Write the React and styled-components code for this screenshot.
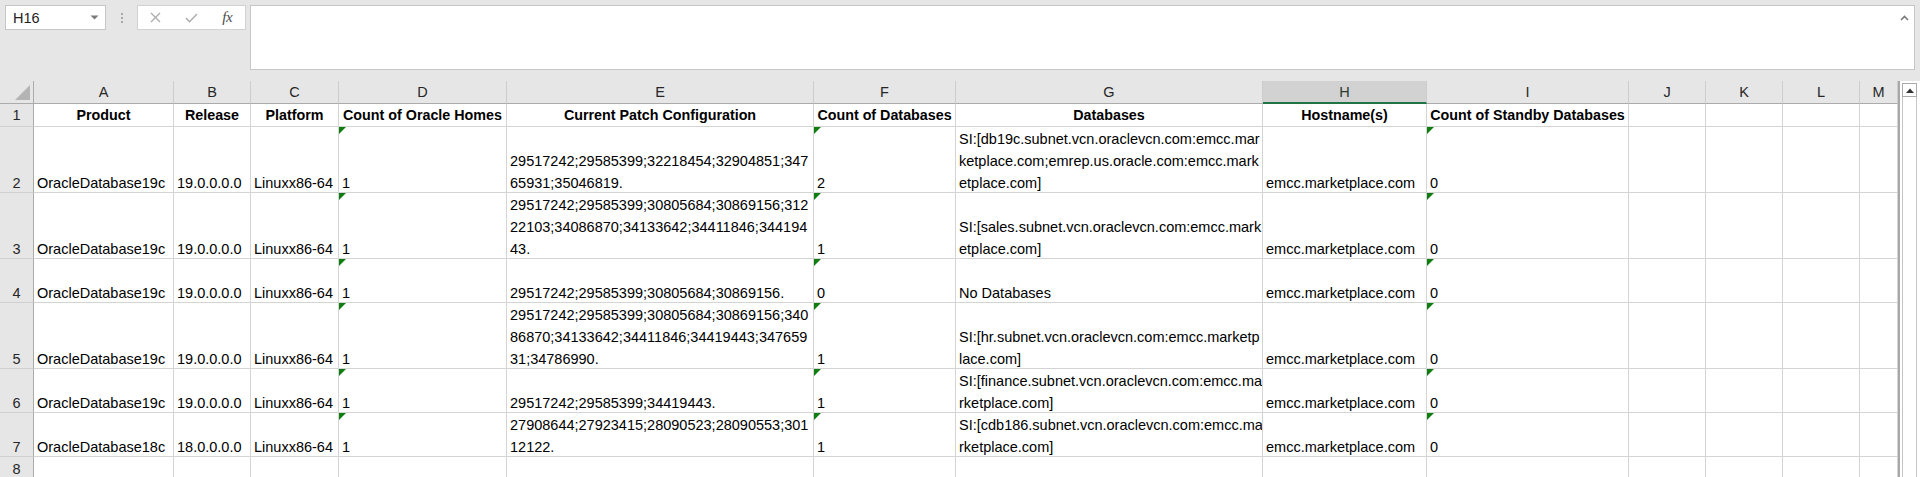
import React from "react";
import styled, { createGlobalStyle } from "styled-components";

const Global = createGlobalStyle`
  html, body { margin: 0; padding: 0; background: #fff; overflow: hidden; }
  #root { width: 1920px; height: 477px; }
`;

const Page = styled.div`
  width: 1920px;
  height: 477px;
  display: flex;
  flex-direction: column;
  overflow: hidden;
  background: #fff;
  font-family: "Liberation Sans", Arial, sans-serif;
`;

const FormulaBar = styled.div`
  flex: none;
  height: 81px;
  box-sizing: border-box;
  padding: 5px 5px 0 5px;
  background: #e6e6e6;
  display: flex;
  align-items: flex-start;
`;

const NameBox = styled.div`
  width: 101px;
  height: 25px;
  box-sizing: border-box;
  background: #fff;
  border: 1px solid #c6c6c6;
  display: flex;
  align-items: center;
  justify-content: space-between;
  padding: 0 6px 0 7px;
  font-size: 14.5px;
  color: #222;
`;

const Grip = styled.div`
  width: 31px;
  height: 25px;
  display: flex;
  flex-direction: column;
  align-items: center;
  justify-content: center;
  gap: 2px;
`;

const GripDot = styled.span`
  width: 2px;
  height: 2px;
  background: #a8a8a8;
`;

const FxButtons = styled.div`
  width: 109px;
  height: 25px;
  box-sizing: border-box;
  background: #fff;
  border: 1px solid #d2d2d2;
  display: flex;
  align-items: center;
`;

const FxButton = styled.span`
  flex: 1;
  display: flex;
  align-items: center;
  justify-content: center;
  color: ${(p) => (p.$disabled ? "#a9a9a9" : "#4a4a4a")};
`;

const FxLabel = styled.span`
  font-family: "Liberation Serif", "Times New Roman", serif;
  font-style: italic;
  font-size: 15px;
  letter-spacing: -0.5px;
  color: #4a4a4a;
`;

const FormulaInput = styled.div`
  margin-left: 4px;
  width: 1665px;
  height: 65px;
  box-sizing: border-box;
  background: #fff;
  border: 1px solid #c6c6c6;
  display: flex;
  justify-content: flex-end;
  align-items: flex-start;
  padding: 9px 5px 0 0;
`;

const Sheet = styled.div`
  flex: 1;
  display: flex;
  min-height: 0;
`;

const Grid = styled.div`
  display: grid;
  grid-template-columns: 34px 140px 77px 88px 168px 307px 142px 307px 164px 202px 77px 77px 77px 38px;
  grid-template-rows: 23px 23px 66px 66px 44px 66px 44px 44px 22px;
  flex: none;
`;

const Corner = styled.div`
  box-sizing: border-box;
  background: #e6e6e6;
  border-right: 1px solid #ababab;
  border-bottom: 1px solid #ababab;
  display: flex;
  align-items: flex-end;
  justify-content: flex-end;
  padding: 0 3px 3px 0;
`;

const ColHeader = styled.div`
  box-sizing: border-box;
  background: ${(p) => (p.$active ? "#d2d2d2" : "#e6e6e6")};
  border-right: 1px solid #cdcdcd;
  border-bottom: ${(p) => (p.$active ? "2px solid #217346" : "1px solid #ababab")};
  display: flex;
  align-items: flex-start;
  justify-content: center;
  overflow: hidden;
  font-size: 14.5px;
  line-height: 22px;
  color: ${(p) => (p.$active ? "#2b3a30" : "#262626")};
`;

const RowHeader = styled.div`
  box-sizing: border-box;
  background: #e6e6e6;
  border-right: 1px solid #ababab;
  border-bottom: 1px solid #d0d0d0;
  display: flex;
  flex-direction: column;
  justify-content: flex-end;
  align-items: center;
  font-size: 14.5px;
  line-height: 22px;
  color: #262626;
`;

const Cell = styled.div`
  position: relative;
  box-sizing: border-box;
  border-right: 1px solid #d4d4d4;
  border-bottom: 1px solid #d4d4d4;
  padding: 0 3px;
  display: flex;
  flex-direction: column;
  justify-content: flex-end;
  align-items: ${(p) => (p.$center ? "center" : "flex-start")};
  overflow: hidden;
  white-space: nowrap;
  font-size: ${(p) => (p.$bold ? "14.3px" : "14.5px")};
  font-weight: ${(p) => (p.$bold ? 700 : 400)};
  line-height: 22px;
  color: #000;
`;

const Lines = styled.div`
  display: flex;
  flex-direction: column;
  align-items: inherit;
  margin-bottom: ${(p) => (p.$shift ? "-2px" : "0")};
`;

const Flag = styled.span`
  position: absolute;
  top: 0;
  left: 0;
  width: 0;
  height: 0;
  border-top: 7px solid #0f7d0f;
  border-right: 7px solid transparent;
`;

const ScrollBar = styled.div`
  flex: 1;
  box-sizing: border-box;
  border-left: 2px solid #a8a8a8;
  padding: 2px 3px 0 2px;
  display: flex;
  flex-direction: column;
  background: #fff;
`;

const ArrowButton = styled.div`
  flex: none;
  height: 14px;
  box-sizing: border-box;
  border: 1px solid #ababab;
  background: #fff;
  display: flex;
  align-items: center;
  justify-content: center;
`;

const Thumb = styled.div`
  flex: 1;
  box-sizing: border-box;
  border-left: 1px solid #c6c6c6;
  border-right: 1px solid #c6c6c6;
  background: #fff;
`;

const columns = ["A", "B", "C", "D", "E", "F", "G", "H", "I", "J", "K", "L", "M"];

const headers = [
  "Product",
  "Release",
  "Platform",
  "Count of Oracle Homes",
  "Current Patch Configuration",
  "Count of Databases",
  "Databases",
  "Hostname(s)",
  "Count of Standby Databases",
];

const rows = [
  {
    product: "OracleDatabase19c",
    release: "19.0.0.0.0",
    patches: ["29517242;29585399;32218454;32904851;347", "65931;35046819."],
    dbCount: "2",
    dbs: [
      "SI:[db19c.subnet.vcn.oraclevcn.com:emcc.mar",
      "ketplace.com;emrep.us.oracle.com:emcc.mark",
      "etplace.com]",
    ],
  },
  {
    product: "OracleDatabase19c",
    release: "19.0.0.0.0",
    patches: [
      "29517242;29585399;30805684;30869156;312",
      "22103;34086870;34133642;34411846;344194",
      "43.",
    ],
    dbCount: "1",
    dbs: ["SI:[sales.subnet.vcn.oraclevcn.com:emcc.mark", "etplace.com]"],
  },
  {
    product: "OracleDatabase19c",
    release: "19.0.0.0.0",
    patches: ["29517242;29585399;30805684;30869156."],
    dbCount: "0",
    dbs: ["No Databases"],
  },
  {
    product: "OracleDatabase19c",
    release: "19.0.0.0.0",
    patches: [
      "29517242;29585399;30805684;30869156;340",
      "86870;34133642;34411846;34419443;347659",
      "31;34786990.",
    ],
    dbCount: "1",
    dbs: ["SI:[hr.subnet.vcn.oraclevcn.com:emcc.marketp", "lace.com]"],
  },
  {
    product: "OracleDatabase19c",
    release: "19.0.0.0.0",
    patches: ["29517242;29585399;34419443."],
    dbCount: "1",
    dbs: ["SI:[finance.subnet.vcn.oraclevcn.com:emcc.ma", "rketplace.com]"],
  },
  {
    product: "OracleDatabase18c",
    release: "18.0.0.0.0",
    patches: ["27908644;27923415;28090523;28090553;301", "12122."],
    dbCount: "1",
    dbs: ["SI:[cdb186.subnet.vcn.oraclevcn.com:emcc.ma", "rketplace.com]"],
  },
];

function DataCell({ lines = [], flag, bold, center, shift = true }) {
  return (
    <Cell $bold={bold} $center={center}>
      {flag && <Flag />}
      <Lines $shift={shift}>
        {lines.map((l, i) => (
          <span key={i}>{l}</span>
        ))}
      </Lines>
    </Cell>
  );
}

function RowNum({ n, shift = true }) {
  return (
    <RowHeader>
      <Lines $shift={shift}>
        <span>{n}</span>
      </Lines>
    </RowHeader>
  );
}

export default function App() {
  return (
    <Page>
      <Global />
      <FormulaBar>
        <NameBox>
          <span>H16</span>
          <svg width="9" height="5" viewBox="0 0 9 5">
            <path d="M0.5 0.5 H8.5 L4.5 4.5 Z" fill="#7a7a7a" />
          </svg>
        </NameBox>
        <Grip>
          <GripDot />
          <GripDot />
          <GripDot />
        </Grip>
        <FxButtons>
          <FxButton $disabled>
            <svg width="11" height="11" viewBox="0 0 11 11">
              <path d="M1 1 L10 10 M10 1 L1 10" stroke="#ababab" strokeWidth="1.3" fill="none" />
            </svg>
          </FxButton>
          <FxButton $disabled>
            <svg width="13" height="10" viewBox="0 0 13 10">
              <path d="M1 5 L4.5 8.8 L12 1" stroke="#ababab" strokeWidth="1.4" fill="none" />
            </svg>
          </FxButton>
          <FxButton>
            <FxLabel>fx</FxLabel>
          </FxButton>
        </FxButtons>
        <FormulaInput>
          <svg width="9" height="6" viewBox="0 0 9 6">
            <path d="M1 5 L4.5 1.5 L8 5" stroke="#7a7a7a" strokeWidth="1.6" fill="none" />
          </svg>
        </FormulaInput>
      </FormulaBar>

      <Sheet>
        <Grid>
          <Corner>
            <svg width="15" height="15" viewBox="0 0 15 15">
              <path d="M15 0 V15 H0 Z" fill="#b4b4b4" />
            </svg>
          </Corner>
          {columns.map((c) => (
            <ColHeader key={c} $active={c === "H"}>
              {c}
            </ColHeader>
          ))}

          <RowNum n="1" shift={false} />
          {headers.map((h) => (
            <DataCell key={h} lines={[h]} bold center shift={false} />
          ))}
          <DataCell />
          <DataCell />
          <DataCell />
          <DataCell />

          {rows.map((r, i) => (
            <React.Fragment key={i}>
              <RowNum n={String(i + 2)} />
              <DataCell lines={[r.product]} />
              <DataCell lines={[r.release]} />
              <DataCell lines={["Linuxx86-64"]} />
              <DataCell lines={["1"]} flag />
              <DataCell lines={r.patches} />
              <DataCell lines={[r.dbCount]} flag />
              <DataCell lines={r.dbs} />
              <DataCell lines={["emcc.marketplace.com"]} />
              <DataCell lines={["0"]} flag />
              <DataCell />
              <DataCell />
              <DataCell />
              <DataCell />
            </React.Fragment>
          ))}

          <RowNum n="8" />
          {columns.map((c) => (
            <DataCell key={c} />
          ))}
        </Grid>
        <ScrollBar>
          <ArrowButton>
            <svg width="8" height="5" viewBox="0 0 8 5">
              <path d="M0 5 L4 0.5 L8 5 Z" fill="#333" />
            </svg>
          </ArrowButton>
          <Thumb />
        </ScrollBar>
      </Sheet>
    </Page>
  );
}
